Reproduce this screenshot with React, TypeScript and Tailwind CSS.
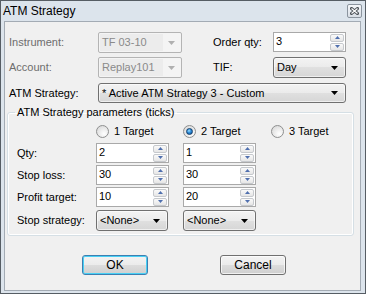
import React from "react";

const font = "font-['Liberation_Sans',Arial,sans-serif]";

function Tri({ up, color, w = 7, h = 4 }: { up?: boolean; color: string; w?: number; h?: number }) {
  return (
    <svg width={w} height={h} viewBox={`0 0 ${w} ${h}`} className="block">
      {up ? (
        <polygon points={`0,${h} ${w},${h} ${w / 2},0`} fill={color} />
      ) : (
        <polygon points={`0,0 ${w},0 ${w / 2},${h}`} fill={color} />
      )}
    </svg>
  );
}

function SpinHalf({ up }: { up?: boolean }) {
  return (
    <div className="flex h-[8px] items-center justify-center rounded-[2px] border border-[#c6c9cd] bg-[linear-gradient(#fafafa,#e6e6e6)]">
      <Tri up={up} color="#4f6fae" w={5} h={3} />
    </div>
  );
}

function Spin({ value, w }: { value: string; w: string }) {
  return (
    <div className={`flex h-[20px] ${w} border border-[#a9a9a9] bg-white`}>
      <div className="flex-1 pl-[2px] text-[11px] leading-[17px] text-black">{value}</div>
      <div className="flex w-[15px] flex-col justify-center gap-[1px] pr-[1px]">
        <SpinHalf up />
        <SpinHalf />
      </div>
    </div>
  );
}

function Combo({ value, w, h = "h-[21px]" }: { value: string; w: string; h?: string }) {
  return (
    <div
      className={`flex ${h} ${w} items-center justify-between rounded-[3px] border border-[#707070] bg-[linear-gradient(#f3f3f3,#ebebeb_50%,#e0e0e0_50%,#d6d6d6)] pl-[3px] pr-[7px] shadow-[inset_0_0_0_1px_rgba(255,255,255,0.6)]`}
    >
      <span className="leading-[13px] text-black">{value}</span>
      <Tri color="#000000" w={7} h={4} />
    </div>
  );
}

function DisabledCombo({ value }: { value: string }) {
  return (
    <div className="flex h-[21px] w-[84px] items-center justify-between rounded-[2px] border border-[#b4b4b4] bg-[#f4f4f4] pr-[6px]">
      <span className="ml-[1px] flex h-[17px] w-[63px] items-center bg-[#ececec] pl-[2px] leading-[13px] text-[#8a8a8a]">
        {value}
      </span>
      <Tri color="#b0b0b0" w={7} h={4} />
    </div>
  );
}

function Radio({ checked, label }: { checked?: boolean; label: string }) {
  return (
    <div className="flex h-[13px] items-center gap-[5px]">
      <div className="flex h-[13px] w-[13px] items-center justify-center rounded-full border border-[#8e8f8f] bg-[radial-gradient(circle_at_65%_70%,#ffffff,#dcdcdc_80%)]">
        {checked && (
          <div className="h-[7px] w-[7px] rounded-full border border-[#123e6b] bg-[radial-gradient(circle_at_40%_35%,#9fe0ff,#2a8ad8_45%,#0b4c8f)]" />
        )}
      </div>
      <span className="leading-[13px]">{label}</span>
    </div>
  );
}

function Button({ label, focused }: { label: string; focused?: boolean }) {
  return (
    <div
      className={`flex h-[20px] w-[66px] items-center justify-center rounded-[3px] border bg-[linear-gradient(#f3f3f3,#ebebeb_50%,#dddddd_50%,#cfcfcf)] text-[12px] ${
        focused
          ? "border-[#3c7fb1] shadow-[inset_0_0_0_1px_#48d0f5]"
          : "border-[#707070] shadow-[inset_0_0_0_1px_rgba(255,255,255,0.7)]"
      }`}
    >
      {label}
    </div>
  );
}

function CloseBtn() {
  return (
    <div className="flex h-[14px] w-[15px] items-center justify-center rounded-[2px] border border-[#8b949e] bg-[linear-gradient(#f4f6f9,#d9dfe6)]">
      <svg width="9" height="8" viewBox="0 0 9 8">
        <path d="M1.5 1.5 L7.5 6.5 M7.5 1.5 L1.5 6.5" stroke="#4b5157" strokeWidth="3" strokeLinecap="square" />
        <path d="M1.5 1.5 L7.5 6.5 M7.5 1.5 L1.5 6.5" stroke="#ffffff" strokeWidth="1.2" />
      </svg>
    </div>
  );
}

export default function App() {
  return (
    <div
      className={`${font} flex h-[294px] w-[366px] flex-col border border-[#565d64] bg-[#dce4ec] text-[11px] text-black`}
    >
      {/* Title bar */}
      <div className="flex h-[20px] items-center justify-between pl-[2px] pr-[3px]">
        <span className="text-[12px] leading-[14px] text-black">ATM Strategy</span>
        <CloseBtn />
      </div>

      {/* Client area */}
      <div className="mb-[2px] ml-[3px] mr-[4px] flex flex-1 flex-col border border-[#a3abb4] bg-[#f0f0f0]">
        {/* Row 1 */}
        <div className="mt-[10px] flex h-[21px] items-center pl-[4px]">
          <span className="w-[89px] text-[#6d6d6d]">Instrument:</span>
          <DisabledCombo value="TF 03-10" />
          <span className="ml-[31px] w-[60px]">Order qty:</span>
          <div className="self-start">
            <Spin value="3" w="w-[73px]" />
          </div>
        </div>

        {/* Row 2 */}
        <div className="mt-[4px] flex h-[21px] items-center pl-[4px]">
          <span className="w-[89px] text-[#6d6d6d]">Account:</span>
          <DisabledCombo value="Replay101" />
          <span className="ml-[31px] w-[60px]">TIF:</span>
          <Combo value="Day" w="w-[73px]" />
        </div>

        {/* Row 3 */}
        <div className="mt-[5px] flex h-[20px] items-center pl-[4px]">
          <span className="w-[89px]">ATM Strategy:</span>
          <Combo value="* Active ATM Strategy 3 - Custom" w="w-[248px]" h="h-[20px]" />
        </div>

        {/* Group box */}
        <fieldset className="ml-[2px] mt-[3px] w-[347px] rounded-[3px] border border-[#d5dfe5] px-0 pb-[4px] shadow-[inset_0_0_0_1px_#ffffff]">
          <legend className="ml-[7px] px-[2px] leading-[13px]">ATM Strategy parameters (ticks)</legend>
          <div className="flex flex-col pl-[9px]">
            <div className="mt-[6px] grid grid-cols-[79px_87px_88px_auto] items-center">
              <span />
              <Radio label="1 Target" />
              <Radio checked label="2 Target" />
              <Radio label="3 Target" />
            </div>
            <div className="mt-[5px] grid h-[20px] grid-cols-[79px_87px_88px_auto] items-center">
              <span>Qty:</span>
              <Spin value="2" w="w-[73px]" />
              <Spin value="1" w="w-[73px]" />
            </div>
            <div className="mt-[2px] grid h-[20px] grid-cols-[79px_87px_88px_auto] items-center">
              <span>Stop loss:</span>
              <Spin value="30" w="w-[73px]" />
              <Spin value="30" w="w-[73px]" />
            </div>
            <div className="mt-[2px] grid h-[20px] grid-cols-[79px_87px_88px_auto] items-center">
              <span>Profit target:</span>
              <Spin value="10" w="w-[73px]" />
              <Spin value="20" w="w-[73px]" />
            </div>
            <div className="mt-[3px] grid h-[21px] grid-cols-[79px_87px_88px_auto] items-center">
              <span>Stop strategy:</span>
              <Combo value="<None>" w="w-[72px]" />
              <Combo value="<None>" w="w-[73px]" />
            </div>
          </div>
        </fieldset>

        {/* Buttons */}
        <div className="mt-[19px] flex gap-[72px] pl-[77px]">
          <Button label="OK" focused />
          <Button label="Cancel" />
        </div>
      </div>
    </div>
  );
}
